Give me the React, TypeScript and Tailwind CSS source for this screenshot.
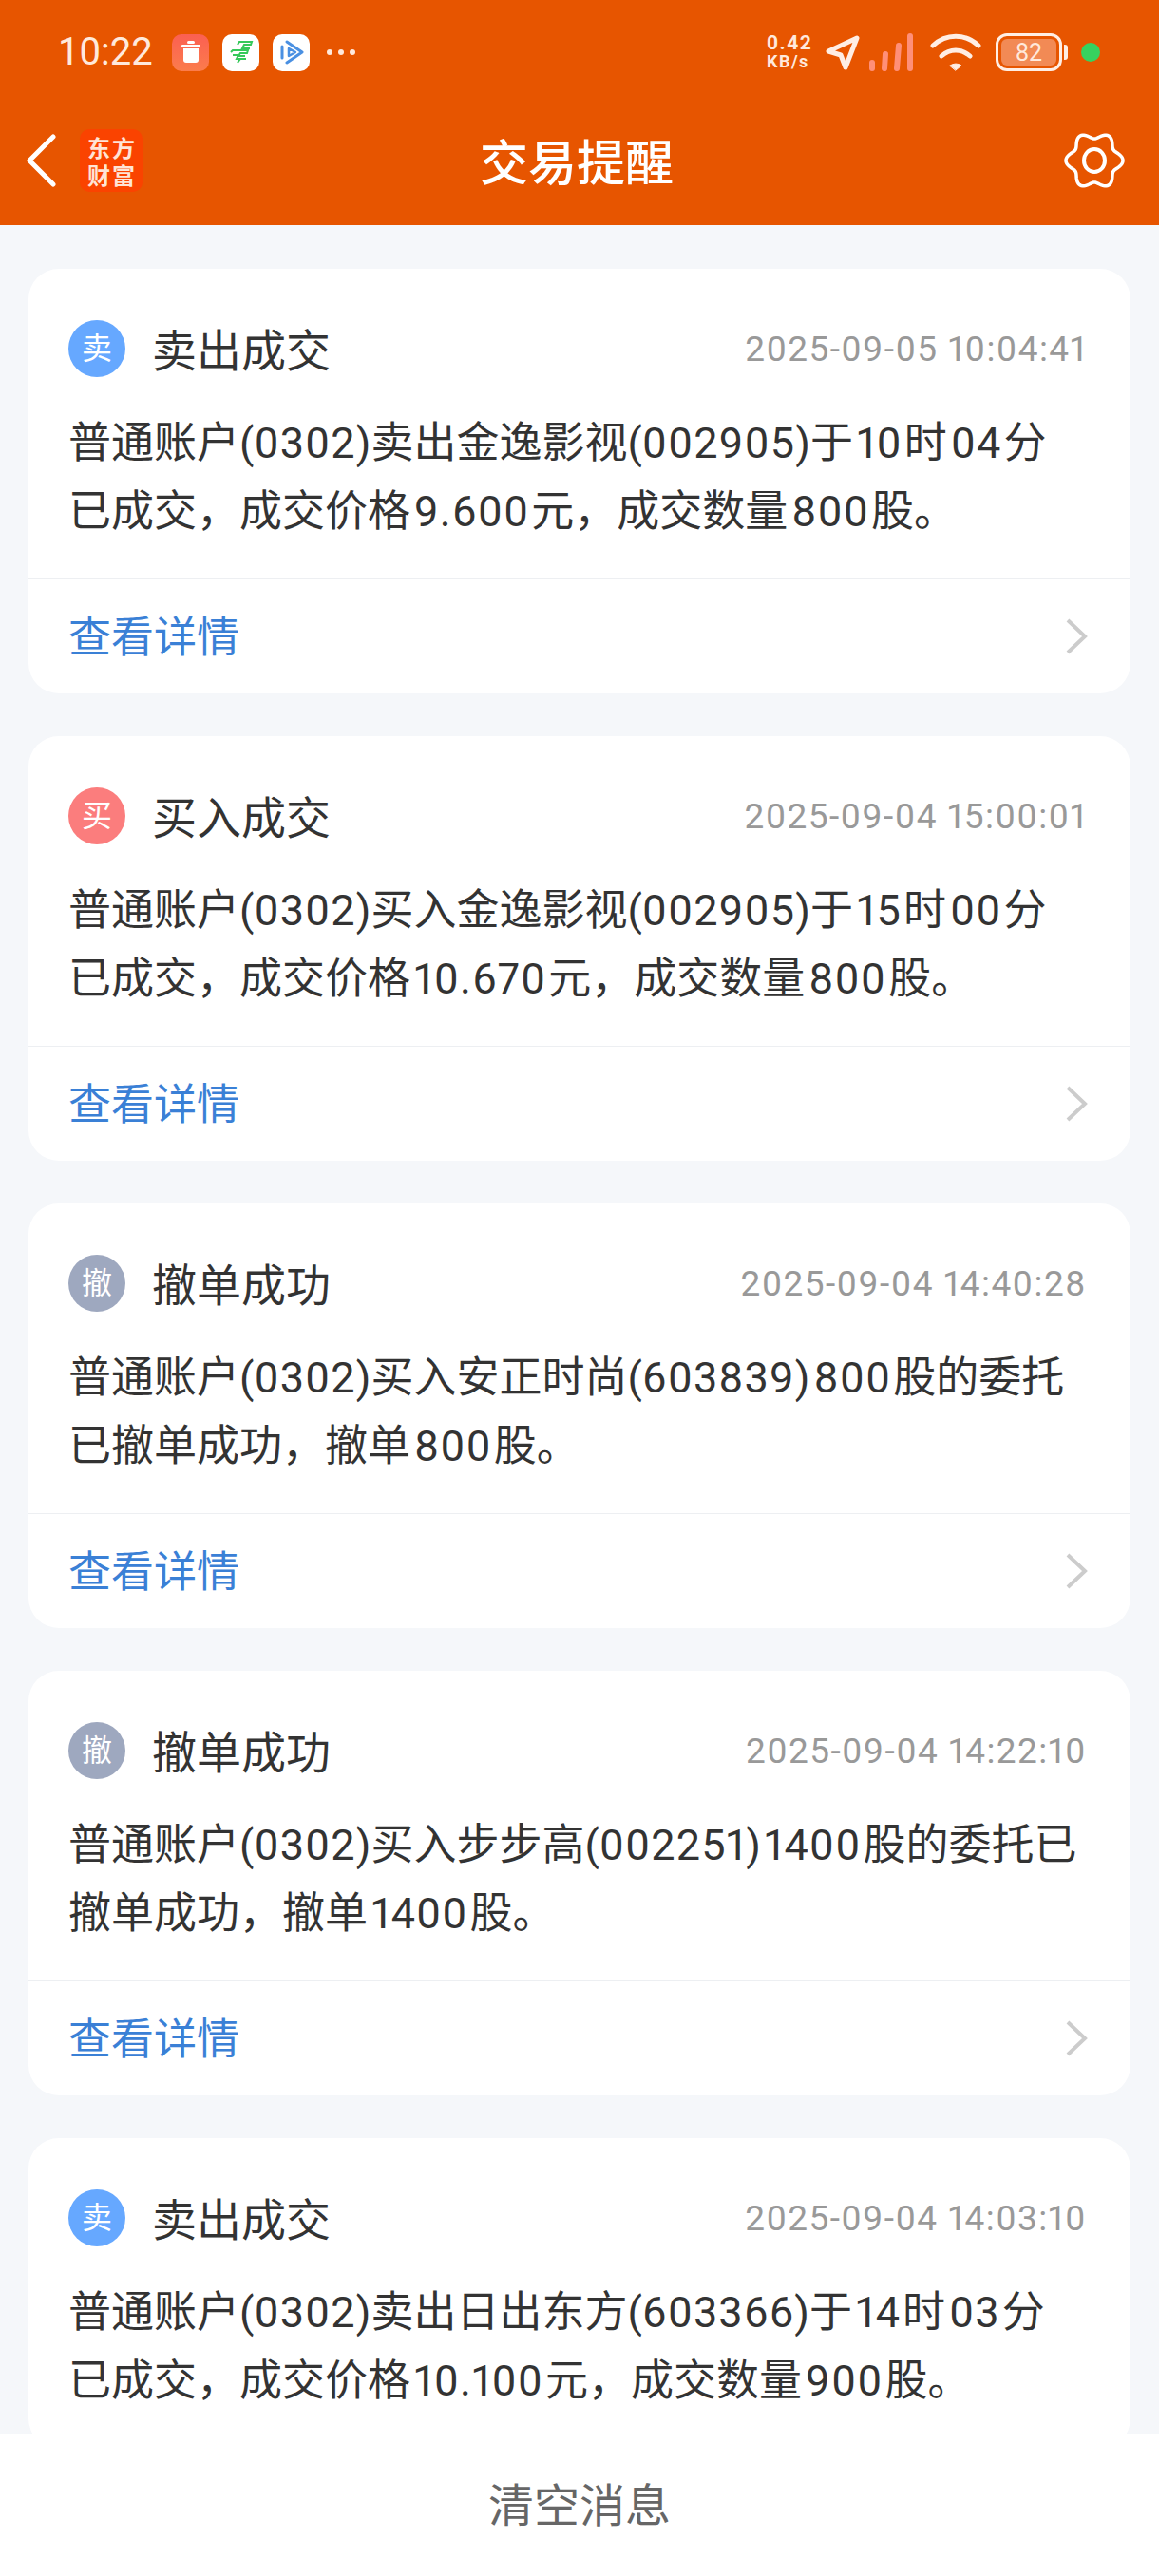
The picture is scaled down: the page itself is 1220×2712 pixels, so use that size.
const cards = [
  {
    type: "sell",
    title: "卖出成交",
    time: "2025-09-05 10:04:41",
    lines: ["普通账户(0302)卖出金逸影视(002905)于10时04分", "已成交，成交价格9.600元，成交数量800股。"],
  },
  {
    type: "buy",
    title: "买入成交",
    time: "2025-09-04 15:00:01",
    lines: ["普通账户(0302)买入金逸影视(002905)于15时00分", "已成交，成交价格10.670元，成交数量800股。"],
  },
  {
    type: "cancel",
    title: "撤单成功",
    time: "2025-09-04 14:40:28",
    lines: ["普通账户(0302)买入安正时尚(603839)800股的委托", "已撤单成功，撤单800股。"],
  },
  {
    type: "cancel",
    title: "撤单成功",
    time: "2025-09-04 14:22:10",
    lines: ["普通账户(0302)买入步步高(002251)1400股的委托已", "撤单成功，撤单1400股。"],
  },
  {
    type: "sell",
    title: "卖出成交",
    time: "2025-09-04 14:03:10",
    lines: ["普通账户(0302)卖出日出东方(603366)于14时03分", "已成交，成交价格10.100元，成交数量900股。"],
  },
];

const badges: Record<string, { label: string; className: string }> = {
  sell: { label: "卖", className: "bg-[#66a8ff]" },
  buy: { label: "买", className: "bg-[#fb7d7d]" },
  cancel: { label: "撤", className: "bg-[#9ea8bf]" },
};

// six soft lobes, dips at top and bottom like the reference cog
function gearPath() {
  const pts: string[] = [];
  for (let i = 0; i < 144; i++) {
    const a = (i / 144) * Math.PI * 2;
    const r = 26.5 + 3.5 * Math.cos(6 * a);
    pts.push(`${(32 + r * Math.cos(a)).toFixed(2)} ${(32 + r * Math.sin(a)).toFixed(2)}`);
  }
  return `M${pts.join("L")}Z`;
}

// the phone font spaces numbers wider and pads them next to CJK characters
function BodyLine({ text }: { text: string }) {
  const parts = text.split(/(\d[\d.]*)/);
  return (
    <div>
      {parts.map((part, i) => {
        if (!/^\d/.test(part)) return <span key={i}>{part}</span>;
        const afterParen = parts[i - 1]?.endsWith("(");
        const beforeParen = parts[i + 1]?.startsWith(")");
        return (
          <span
            key={i}
            className={`tracking-[1.1px] proportional-nums ${afterParen ? "" : "ml-[4px]"} ${beforeParen ? "" : "mr-[2px]"}`}
          >
            {part}
          </span>
        );
      })}
    </div>
  );
}

function StatusBar() {
  return (
    <div className="flex h-[110px] items-center justify-between pl-[61px] pr-[62px] text-[#ffe9dc]">
      <div className="flex items-center">
        <span className="w-[100px] text-[40px] leading-none [font-family:Roboto,sans-serif]">10:22</span>
        <div className="ml-[20px] flex gap-[14px]">
          <div className="flex h-[39px] w-[39px] items-center justify-center rounded-[10px] bg-gradient-to-b from-[#fb5f52] to-[#fb7c4c]">
            <svg width="20" height="24" viewBox="0 0 20 24" fill="#fff">
              <rect x="6" y="0" width="8" height="3" rx="1.5" />
              <rect x="0" y="4" width="20" height="3" rx="1" />
              <path d="M2 8h16v12a3 3 0 0 1-3 3H5a3 3 0 0 1-3-3z" />
            </svg>
          </div>
          <div className="flex h-[39px] w-[39px] items-center justify-center rounded-[10px] bg-white">
            <svg width="26" height="26" viewBox="0 0 26 26" fill="none" stroke="#35c95a" strokeWidth="2">
              <path d="M9 5l2-3h13l-1 3h-7l-2 4h8" />
              <path d="M2 13l2-2h16l-1 3h-7l-2 3h7" />
              <path d="M4 16h6l-2 4h7" />
              <path d="M9 24l3-4h6" />
            </svg>
          </div>
          <div className="flex h-[39px] w-[39px] items-center justify-center rounded-[10px] bg-white">
            <svg width="26" height="28" viewBox="0 0 26 28" fill="none" stroke="#4a90e2" strokeWidth="3" strokeLinejoin="round" strokeLinecap="round">
              <path d="M3 8v12" />
              <path d="M8 3l16 11L8 25" />
              <path d="M10 10l7 4-7 4z" strokeWidth="2.5" />
            </svg>
          </div>
        </div>
        <div className="ml-[18px] flex gap-[6px]">
          <span className="h-[6px] w-[6px] rounded-full bg-[#ffe9dc]" />
          <span className="h-[6px] w-[6px] rounded-full bg-[#ffe9dc]" />
          <span className="h-[6px] w-[6px] rounded-full bg-[#ffe9dc]" />
        </div>
      </div>
      <div className="flex items-center">
        <div className="flex w-[52px] flex-col items-start font-bold leading-[20px] [font-family:Roboto,sans-serif]">
          <span className="text-[21px] tracking-[1.5px]">0.42</span>
          <span className="text-[18px] tracking-[1.5px]">KB/s</span>
        </div>
        <svg className="ml-[10px]" width="36" height="38" viewBox="0 0 36 38" fill="none" stroke="#ffeee4" strokeWidth="5" strokeLinejoin="round">
          <path d="M3 18L33 4 21 35 16 22z" />
        </svg>
        <svg className="ml-[9px]" width="48" height="42" viewBox="0 0 48 42" fill="none" stroke="#ff8f78" strokeWidth="6" strokeLinecap="round">
          <path d="M4 38v-6" />
          <path d="M17 38l1-15" />
          <path d="M30 38l2-24" />
          <path d="M44 38V4" />
        </svg>
        <svg className="ml-[17px]" width="54" height="40" viewBox="0 0 54 40" fill="none" stroke="#ffeee4" strokeWidth="5" strokeLinecap="round">
          <path d="M3 13c14-13 34-13 48 0" />
          <path d="M12 24c9-8 21-8 30 0" />
          <path d="M21 34q6-4 12 0l-6 5z" fill="#ffeee4" strokeWidth="1" />
        </svg>
        <div className="ml-[15px] flex h-[40px] w-[70px] items-center justify-center rounded-[12px] border-[3px] border-[#ffeee4]">
          <span className="flex h-[28px] w-[58px] items-center justify-center rounded-[6px] bg-[#f28a55] text-[25px] leading-none [font-family:Roboto,sans-serif]">
            82
          </span>
        </div>
        <span className="ml-[2px] h-[16px] w-[4px] rounded-r-[3px] bg-[#ffeee4]" />
        <span className="ml-[14px] h-[20px] w-[20px] rounded-full bg-[#36d25f]" />
      </div>
    </div>
  );
}

function NavBar() {
  return (
    <div className="grid h-[127px] grid-cols-3 items-center pb-[10px] pl-[27px] pr-[36px]">
      <div className="flex items-center">
        <svg width="32" height="56" viewBox="0 0 32 56" fill="none" stroke="#fff" strokeWidth="5" strokeLinecap="round" strokeLinejoin="round">
          <path d="M29 3L4 28l25 25" />
        </svg>
        <div className="ml-[25px] grid h-[66px] w-[66px] grid-cols-2 content-center justify-items-center rounded-[10px] bg-[#fa4300] px-[7px] text-[24px] font-bold leading-[29px] text-[#ffe4d6] [font-family:'Noto_Sans_CJK_SC',sans-serif]">
          <span>东</span>
          <span>方</span>
          <span>财</span>
          <span>富</span>
        </div>
      </div>
      <span className="ml-[3px] whitespace-nowrap text-center text-[51px] font-medium leading-none text-white [font-family:'Noto_Sans_CJK_SC',sans-serif]">
        交易提醒
      </span>
      <svg className="justify-self-end" width="64" height="64" viewBox="0 0 64 64" fill="none" stroke="#fff" strokeWidth="3.5">
        <path d={gearPath()} />
        <ellipse cx="32" cy="32" rx="11" ry="12" strokeWidth="4" />
      </svg>
    </div>
  );
}

function MessageCard({ card, showFooter }: { card: (typeof cards)[number]; showFooter: boolean }) {
  const badge = badges[card.type];
  return (
    <div className="shrink-0 rounded-[32px] bg-white">
      <div className="flex h-[327px] flex-col border-b border-[#edeff2] pl-[42px] pr-[46px] pt-[54px]">
        <div className="flex h-[60px] items-center justify-between">
          <div className="flex items-center">
            <span className={`flex h-[60px] w-[60px] items-center justify-center rounded-full text-[32px] leading-none text-white ${badge.className}`}>
              {badge.label}
            </span>
            <span className="ml-[28px] pt-[5px] text-[47px] leading-none text-[#333]">{card.title}</span>
          </div>
          <span className="text-[37px] leading-none tracking-[1.4px] proportional-nums text-[#999] [font-family:Roboto,sans-serif]">{card.time}</span>
        </div>
        <div className="mt-[34px] text-[45px] leading-[72px] whitespace-nowrap text-[#333]">
          {card.lines.map((line) => (
            <BodyLine key={line} text={line} />
          ))}
        </div>
      </div>
      {showFooter && (
        <div className="flex h-[120px] items-center justify-between pl-[42px] pr-[45px]">
          <span className="pt-[2px] text-[45px] leading-none text-[#3a80d6]">查看详情</span>
          <svg width="24" height="38" viewBox="0 0 24 38" fill="none" stroke="#ccc" strokeWidth="4">
            <path d="M3 2l18 17L3 36" />
          </svg>
        </div>
      )}
    </div>
  );
}

export default function App() {
  return (
    <div className="flex h-[2712px] w-[1220px] flex-col overflow-hidden bg-[#f5f7fa] [font-family:Roboto,'Noto_Sans_CJK_SC',sans-serif]">
      <div className="bg-[#e75500]">
        <StatusBar />
        <NavBar />
      </div>
      <div className="flex min-h-0 flex-1 flex-col gap-[45px] overflow-hidden px-[30px] pt-[46px]">
        {cards.map((card, i) => (
          <MessageCard key={card.time} card={card} showFooter={i < cards.length - 1} />
        ))}
      </div>
      <div className="flex h-[150px] items-center justify-center border-t border-[#f0f1f3] bg-white pt-[3px] text-[48px] leading-none text-[#666]">
        清空消息
      </div>
    </div>
  );
}
